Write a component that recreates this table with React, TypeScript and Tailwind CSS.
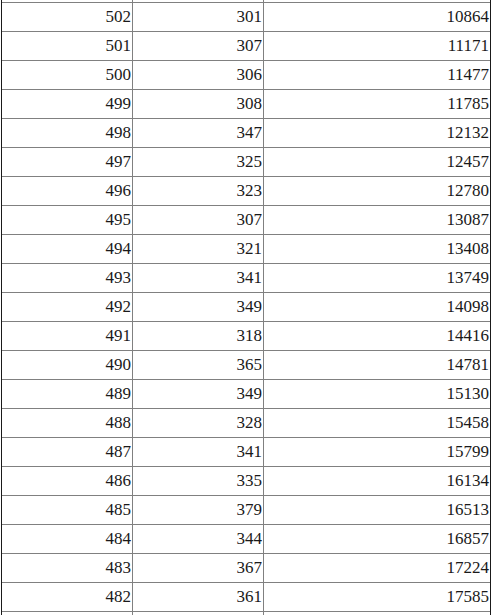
import React from "react";

const rows: [number, number, number][] = [
  [502, 301, 10864],
  [501, 307, 11171],
  [500, 306, 11477],
  [499, 308, 11785],
  [498, 347, 12132],
  [497, 325, 12457],
  [496, 323, 12780],
  [495, 307, 13087],
  [494, 321, 13408],
  [493, 341, 13749],
  [492, 349, 14098],
  [491, 318, 14416],
  [490, 365, 14781],
  [489, 349, 15130],
  [488, 328, 15458],
  [487, 341, 15799],
  [486, 335, 16134],
  [485, 379, 16513],
  [484, 344, 16857],
  [483, 367, 17224],
  [482, 361, 17585],
];

function Row({ a, b, c, h, top }: { a?: number; b?: number; c?: number; h: string; top: boolean }) {
  return (
    <div className={`flex ${h} ${top ? "border-t border-[#808080]" : ""}`}>
      <div className="w-[131px] border-r border-[#808080] flex items-center justify-end pr-[1px]">{a}</div>
      <div className="w-[131px] border-r border-[#808080] flex items-center justify-end pr-[1px]">{b}</div>
      <div className="w-[226px] flex items-center justify-end pr-[1px]">{c}</div>
    </div>
  );
}

export default function App() {
  return (
    <div className="w-[494px] h-[615px] overflow-hidden bg-white">
      <div
        className="ml-[1px] w-[490px] border-l border-r border-[#1a1a1a] text-[17px] text-[#1a1a1a]"
        style={{ fontFamily: '"Liberation Serif", "Times New Roman", serif' }}
      >
        <Row h="h-[2px]" top={false} />
        {rows.map(([a, b, c]) => (
          <Row key={a} a={a} b={b} c={c} h="h-[29px]" top={true} />
        ))}
        <Row h="h-[10px]" top={true} />
      </div>
    </div>
  );
}
